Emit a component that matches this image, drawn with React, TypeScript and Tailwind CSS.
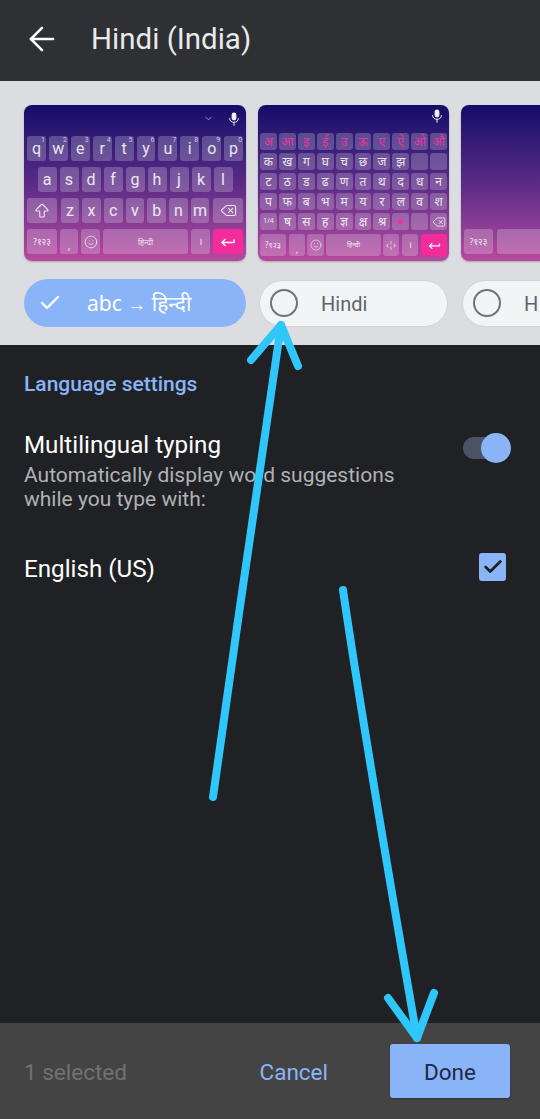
import React from "react";
import { ArrowLeft, ArrowBigUp, ChevronDown, Check, Delete, Smile } from "lucide-react";

const deva = { fontFamily: '"Noto Sans", "Noto Sans Devanagari", "Lohit Devanagari", "DejaVu Sans", Roboto, sans-serif' };

function EnterIcon({ size = 18 }: { size?: number }) {
  return (
    <svg width={size} height={size} viewBox="0 0 18 18" fill="none" stroke="#fff" strokeWidth="1.5" strokeLinecap="round" strokeLinejoin="round">
      <path d="M15 7V9.5H3" />
      <path d="M6 6.5L3 9.5L6 12.5" />
    </svg>
  );
}

function MicIcon() {
  return (
    <svg width="12" height="14" viewBox="0 0 12 14" fill="none">
      <rect x="3.6" y="0.5" width="4.8" height="8" rx="2.4" fill="#f0eef6" />
      <path d="M1.6 6.5C1.6 9 3.6 10.3 6 10.3S10.4 9 10.4 6.5" stroke="#e6e3f0" strokeWidth="1" strokeLinecap="round" />
      <path d="M6 10.3V13.2" stroke="#e6e3f0" strokeWidth="1.1" strokeLinecap="round" />
    </svg>
  );
}

function Key({ label, sup, className = "", text = "" }: { label?: React.ReactNode; sup?: string; className?: string; text?: string }) {
  return (
    <div className={`relative flex items-center justify-center rounded-[3px] bg-white/[0.22] text-white/85 ${className} ${text}`}>
      {label}
      {sup && <span className="absolute right-[1px] top-0 text-[7px] leading-[9px] text-white/70">{sup}</span>}
    </div>
  );
}

const row1 = [["q", "1"], ["w", "2"], ["e", "3"], ["r", "4"], ["t", "5"], ["y", "6"], ["u", "7"], ["i", "8"], ["o", "9"], ["p", "0"]];

function EnglishKeyboard() {
  return (
    <div className="flex h-[156px] w-[222px] shrink-0 flex-col overflow-hidden rounded-lg bg-gradient-to-b from-[#150a68] via-[#5a2a86] to-[#b8499f] px-[3px] shadow-[0_1px_2px_rgba(0,0,0,0.25)]">
      <div className="flex h-[31px] shrink-0 items-center justify-end gap-[14px] pb-[4px] pr-[3px]">
        <ChevronDown size={11} className="text-white/60" />
        <MicIcon />
      </div>
      <div className="flex flex-col gap-[6px] font-['Roboto',sans-serif] text-[16px]">
        <div className="flex h-[25px] gap-[3px]">
          {row1.map(([k, s]) => <Key key={k} label={k} sup={s} className="w-[19px]" />)}
        </div>
        <div className="flex h-[25px] justify-center gap-[3px]">
          {"asdfghjkl".split("").map((k) => <Key key={k} label={k} className="w-[19px]" />)}
        </div>
        <div className="flex h-[25px] gap-[3px]">
          <Key label={<ArrowBigUp size={18} strokeWidth={1.5} />} className="mr-[1px] w-[30px]" />
          {"zxcvbnm".split("").map((k) => <Key key={k} label={k} className="w-[19px]" />)}
          <Key label={<Delete size={17} strokeWidth={1.5} />} className="ml-[1px] w-[30px]" />
        </div>
        <div className="flex h-[25px] gap-[3px]" style={deva}>
          <Key label="?१२३" text="text-[9px]" className="w-[30px]" />
          <Key label="," text="text-[10px] items-end" className="w-[18px]" />
          <Key label={<Smile size={14} strokeWidth={1.3} />} className="w-[19px]" />
          <Key label="हिन्दी" text="text-[8px]" className="w-[85px]" />
          <Key label="।" text="text-[10px]" className="w-[19px]" />
          <div className="flex w-[30px] items-center justify-center rounded-[3px] bg-[#f32b9b]"><EnterIcon /></div>
        </div>
      </div>
    </div>
  );
}

const hindiRows = [
  ["अ", "आ", "इ", "ई", "उ", "ऊ", "ए", "ऐ", "ओ", "औ"],
  ["क", "ख", "ग", "घ", "च", "छ", "ज", "झ", "", ""],
  ["ट", "ठ", "ड", "ढ", "ण", "त", "थ", "द", "ध", "न"],
  ["प", "फ", "ब", "भ", "म", "य", "र", "ल", "व", "श"],
];

function HindiKeyboard() {
  return (
    <div className="flex h-[156px] w-[191px] shrink-0 flex-col overflow-hidden rounded-lg bg-gradient-to-b from-[#150a68] via-[#5a2a86] to-[#b8499f] px-[2px] shadow-[0_1px_2px_rgba(0,0,0,0.25)]" style={deva}>
      <div className="flex h-[28px] shrink-0 items-center justify-end pb-[6px] pr-[4px]">
        <MicIcon />
      </div>
      <div className="flex flex-col gap-[3px] text-[12px]">
        {hindiRows.map((row, i) => (
          <div key={i} className="flex h-[17px] gap-[2px]">
            {row.map((k, j) => (
              <Key key={j} label={k} className="w-[17px]" text={i === 0 ? "!text-[#e8359f]" : ""} />
            ))}
          </div>
        ))}
        <div className="flex h-[17px] gap-[2px]">
          <Key label="1/4" text="text-[7px]" className="w-[17px]" />
          {["ष", "स", "ह", "ज्ञ", "क्ष", "श्र"].map((k) => <Key key={k} label={k} className="w-[17px]" />)}
          <Key label={<span className="h-[5px] w-[5px] rounded-full bg-[#e8359f]" />} className="w-[17px]" />
          <Key className="w-[17px]" />
          <Key label={<Delete size={14} strokeWidth={1.5} />} className="w-[17px]" />
        </div>
        <div className="mt-[1px] flex h-[22px] gap-[2px]">
          <Key label="?१२३" text="text-[8px]" className="w-[26px]" />
          <Key label="," text="text-[9px] items-end" className="ml-[1px] w-[16px]" />
          <Key label={<Smile size={12} strokeWidth={1.3} />} className="w-[17px]" />
          <Key label="हिन्दी" text="text-[7px]" className="w-[55px]" />
          <Key label="‹¦›" text="text-[8px]" className="w-[16px]" />
          <Key label="।" text="text-[9px]" className="ml-[1px] w-[16px]" />
          <div className="ml-[1px] flex w-[26px] items-center justify-center rounded-[3px] bg-[#f32b9b]"><EnterIcon size={15} /></div>
        </div>
      </div>
    </div>
  );
}

function PartialKeyboard() {
  return (
    <div className="flex h-[156px] w-[191px] shrink-0 flex-col justify-end overflow-hidden rounded-lg bg-gradient-to-b from-[#150a68] via-[#5a2a86] to-[#b8499f] px-[3px] pb-[7px] shadow-[0_1px_2px_rgba(0,0,0,0.25)]" style={deva}>
      <div className="flex h-[25px] gap-[4px]">
        <Key label="?१२३" text="text-[9px]" className="w-[29px]" />
        <Key className="w-[100px]" />
      </div>
    </div>
  );
}

function RadioChip({ label, className }: { label: string; className: string }) {
  return (
    <div className={`flex h-[47px] shrink-0 items-center rounded-full border border-[#d2d3d6] bg-[#f3f4f5] pl-[10px] font-['Roboto',sans-serif] text-[20px] text-[#5f6368] ${className}`}>
      <span className="h-[28px] w-[28px] shrink-0 rounded-full border-2 border-[#6f7276]" />
      <span className="ml-[23px] pt-[2px]">{label}</span>
    </div>
  );
}

export default function App() {
  return (
    <div className="relative flex h-[1119px] w-[540px] flex-col overflow-hidden bg-[#202124] font-['Roboto',sans-serif]">
      <header className="flex h-[81px] shrink-0 items-center bg-[#2f3033] pb-[3px] pl-[23px] text-[#e8eaed]">
        <ArrowLeft size={38} strokeWidth={1.6} className="text-white" />
        <h1 className="ml-[30px] text-[29.5px] font-normal">Hindi (India)</h1>
      </header>

      <section className="flex h-[264px] shrink-0 flex-col gap-[18px] overflow-hidden bg-[#dcdde0] pl-[24px] pt-[24px]">
        <div className="flex gap-[12px]">
          <EnglishKeyboard />
          <HindiKeyboard />
          <PartialKeyboard />
        </div>
        <div className="flex items-center">
          <div className="flex h-[48px] w-[222px] shrink-0 items-center rounded-full bg-[#8ab4f8] pl-[14px] text-[21px] text-white" style={deva}>
            <Check size={24} strokeWidth={2.4} />
            <span className="ml-[25px] whitespace-nowrap pt-[2px]">
              abc <span className="font-['Liberation_Sans'] text-[19px] font-light">→</span> हिन्दी
            </span>
          </div>
          <RadioChip label="Hindi" className="ml-[13px] w-[189px]" />
          <RadioChip label="H" className="ml-[14px] w-[190px]" />
        </div>
      </section>

      <main className="flex flex-1 flex-col px-[24px] pt-[27px]">
        <h2 className="text-[21px] font-medium leading-[24px] text-[#8ab4f8]">Language settings</h2>
        <div className="mt-[35px] flex items-start justify-between">
          <div>
            <div className="text-[24.2px] leading-[28px] text-white">Multilingual typing</div>
            <div className="mt-[4px] text-[21px] leading-[24px] text-[#b0b2b5]">
              Automatically display word suggestions
              <br />
              while you type with:
            </div>
          </div>
          <div className="relative mr-[5px] mt-[6px] h-[22px] w-[48px] shrink-0 rounded-full bg-[#4a5368]">
            <span className="absolute right-0 -top-[4px] h-[30px] w-[30px] rounded-full bg-[#8ab4f8]" />
          </div>
        </div>
        <div className="mt-[42px] flex items-center justify-between pr-[10px]">
          <span className="text-[24.2px] leading-[28px] text-white">English (US)</span>
          <span className="mb-[3px] flex h-[28px] w-[27px] items-center justify-center rounded-[3px] bg-[#8ab4f8]">
            <Check size={22} strokeWidth={3} className="text-[#202124]" />
          </span>
        </div>
      </main>

      <footer className="flex h-[96px] shrink-0 items-center bg-[#444444] pl-[24px] pr-[30px] text-[22.5px]">
        <span className="flex-1 pt-[3px] text-[#717171]">1 selected</span>
        <span className="mr-[62px] pt-[3px] text-[#8ab4f8]">Cancel</span>
        <button className="flex h-[54px] w-[120px] items-center justify-center rounded-[3px] bg-[#8ab4f8] pt-[3px] text-[#202a44] shadow-[0_1px_2px_rgba(0,0,0,0.3)]">Done</button>
      </footer>

      <svg className="pointer-events-none absolute left-0 top-0" width="540" height="1119" fill="none" stroke="#2fc6fb" strokeWidth="8" strokeLinecap="round" strokeLinejoin="round">
        <path d="M213 797C235 640 258 480 281 325" />
        <path d="M251 360L281 325L298 366" />
        <path d="M343 590C365 740 393 900 417 1038" />
        <path d="M388 998L417 1038L434 993" />
      </svg>
    </div>
  );
}
